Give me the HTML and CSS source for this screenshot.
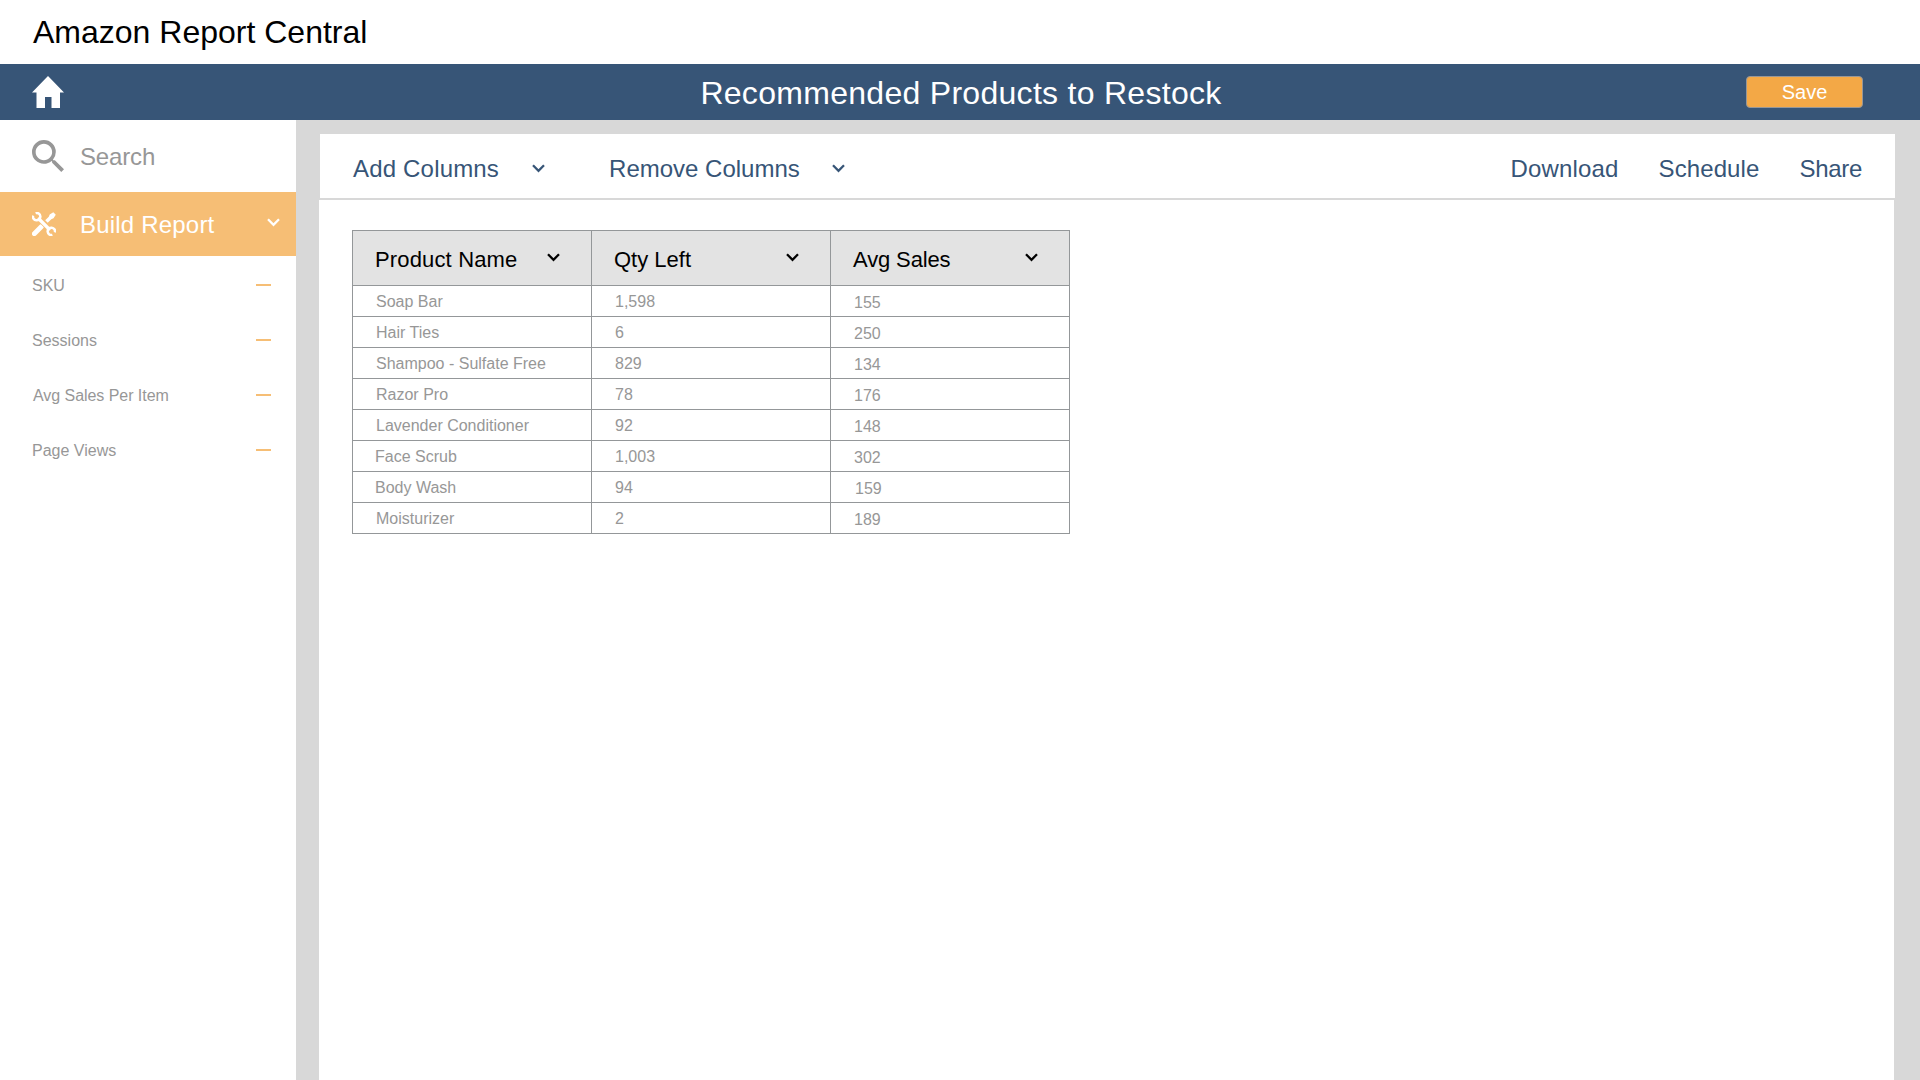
FILE: index.html
```html
<!DOCTYPE html>
<html lang="en">
<head>
<meta charset="utf-8">
<title>Amazon Report Central</title>
<link rel="stylesheet" href="styles.css">
</head>
<body>
<svg class="defs" aria-hidden="true">
  <symbol id="chevron" viewBox="0 0 13 9"><path d="M1 1.3 6.5 6.8 12 1.3" fill="none" stroke="currentColor" stroke-width="2.3"/></symbol>
</svg>
<header class="brand">Amazon Report Central</header>
<div class="titlebar">
  <svg class="home" viewBox="0 0 32 32"><path d="M16 0 32 16.5H28V32H19.5V21H13V32H4.500V16.500H0Z" fill="#fff"/></svg>
  <h1 class="title">Recommended Products to Restock</h1>
  <button class="save">Save</button>
</div>
<div class="body">
  <aside class="sidebar">
    <div class="search">
      <svg class="search-icon" viewBox="3 3 17.490 17.490"><path fill="#979797" d="M15.500 14h-.79l-.28-.27A6.471 6.471 0 0 0 16 9.500 6.500 6.500 0 1 0 9.500 16c1.610 0 3.090-.59 4.230-1.570l.27.28v.79l5 4.990L20.490 19l-4.990-5zm-6 0C7.010 14 5 11.990 5 9.500S7.010 5 9.500 5 14 7.010 14 9.500 11.990 14 9.500 14z"/></svg>
      <span class="search-label">Search</span>
    </div>
    <div class="build">
      <svg class="tools" viewBox="0 0 24 24">
        <path fill="#fff" d="M21.300 .2 23.800 2.700 21.500 6.300 19.300 7.200 15.700 10.800 13.200 8.300 16.800 4.700 17.700 2.500Z"/>
        <path d="M2.300 21.700 9.500 14.500" fill="none" stroke="#fff" stroke-width="4.800" stroke-linecap="round"/>
        <path d="M7 7 17 17" fill="none" stroke="#f6be75" stroke-width="4.800"/>
        <g fill="none" stroke="#fff">
          <path d="M6 6 18 18" stroke-width="3.200"/>
          <path d="M3.600 1.100A3.700 3.700 0 1 1 1.100 3.600" stroke-width="2.500"/>
          <path d="M20.400 22.900A3.700 3.700 0 1 1 22.900 20.400" stroke-width="2.500"/>
        </g>
      </svg>
      <span class="build-label">Build Report</span>
      <svg class="chev"><use href="#chevron"/></svg>
    </div>
    <ul class="fields">
      <li><span>SKU</span><i class="minus"></i></li>
      <li><span>Sessions</span><i class="minus"></i></li>
      <li><span class="nudge">Avg Sales Per Item</span><i class="minus"></i></li>
      <li><span>Page Views</span><i class="minus"></i></li>
    </ul>
  </aside>
  <main class="main">
    <nav class="toolbar">
      <a class="menu add"><span>Add Columns</span><svg class="chev"><use href="#chevron"/></svg></a>
      <a class="menu remove"><span>Remove Columns</span><svg class="chev"><use href="#chevron"/></svg></a>
      <div class="actions"><a class="download">Download</a><a class="schedule">Schedule</a><a class="share">Share</a></div>
    </nav>
    <section class="sheet">
      <table class="report">
        <thead><tr>
          <th><div><span class="col-name">Product Name</span><svg class="chev"><use href="#chevron"/></svg></div></th>
          <th><div><span>Qty Left</span><svg class="chev"><use href="#chevron"/></svg></div></th>
          <th><div><span class="col-avg">Avg Sales</span><svg class="chev"><use href="#chevron"/></svg></div></th>
        </tr></thead>
        <tbody>
          <tr><td>Soap Bar</td><td>1,598</td><td>155</td></tr>
          <tr><td>Hair Ties</td><td>6</td><td>250</td></tr>
          <tr><td>Shampoo - Sulfate Free</td><td>829</td><td>134</td></tr>
          <tr><td>Razor Pro</td><td>78</td><td>176</td></tr>
          <tr><td>Lavender Conditioner</td><td>92</td><td>148</td></tr>
          <tr><td class="outdent">Face Scrub</td><td>1,003</td><td>302</td></tr>
          <tr><td class="outdent">Body Wash</td><td>94</td><td class="indent">159</td></tr>
          <tr><td>Moisturizer</td><td>2</td><td>189</td></tr>
        </tbody>
      </table>
    </section>
  </main>
</div>
</body>
</html>
```
FILE: styles.css
```css
* { box-sizing: border-box; }
body { margin: 0; height: 100vh; display: flex; flex-direction: column; overflow: hidden; background: #fff; font-family: "Liberation Sans", Arial, sans-serif; color: #000; }
.defs { display: none; }
svg { display: block; flex: none; }
span, a { white-space: nowrap; }
.brand { height: 64px; flex: none; padding-left: 33px; font-size: 32px; line-height: 64px; }
.titlebar { height: 56px; flex: none; background: #375577; display: grid; grid-template-columns: 268px 1fr 268px; align-items: center; padding: 0 57px 0 32px; }
.home { width: 32px; height: 32px; }
.title { margin: 0 0 0 27px; padding-top: 2px; font-size: 32px; font-weight: 400; line-height: 54px; letter-spacing: .29px; color: #fff; text-align: center; }
.save { justify-self: end; width: 117px; height: 32px; padding: 0; background: #f3a846; border: 1px solid #979797; border-radius: 4px; color: #fff; font: 20px/28px "Liberation Sans", Arial, sans-serif; }
.body { flex: 1; display: flex; background: #d8d8d8; min-height: 0; }
.sidebar { width: 296px; flex: none; background: #fff; }
.search { height: 72px; display: flex; align-items: center; gap: 16px; padding-left: 32px; font-size: 24px; color: #979797; }
.search-icon { width: 32px; height: 32px; }
.search-label { padding-top: 2px; letter-spacing: -.15px; }
.build { height: 64px; display: flex; align-items: center; padding: 0 16px 0 32px; background: #f6be75; color: #fff; font-size: 24px; }
.build-label { padding-top: 2px; letter-spacing: .2px; }
.tools { width: 24px; height: 24px; margin-right: 24px; }
.chev { width: 13px; height: 9px; }
.build .chev { margin-left: auto; margin-bottom: 3px; }
.fields { list-style: none; margin: 0; padding: 2px 25px 0 32px; font-size: 16px; color: #979797; }
.fields li { height: 55px; display: flex; align-items: center; justify-content: space-between; }
.nudge { padding-left: 1px; letter-spacing: -.05px; }
.minus { width: 15px; height: 2px; margin-bottom: 2px; background: #f6be75; }
.main { flex: 1; display: flex; flex-direction: column; padding: 14px 26px 0 23px; }
.toolbar { height: 64px; flex: none; margin: 0 -1px 0 1px; background: #fff; display: flex; align-items: center; padding: 5px 33px 0; font-size: 24px; color: #375577; }
.menu { display: flex; align-items: center; }
.menu .chev { margin-left: 33px; margin-bottom: 1px; }
.add { letter-spacing: .18px; }
.remove { margin-left: 64px; }
.remove .chev { margin-left: 32px; }
.actions { margin-left: auto; display: flex; gap: 40px; }
.download { letter-spacing: .18px; }
.schedule { letter-spacing: .1px; }
.share { letter-spacing: -.3px; }
.sheet { flex: 1; margin-top: 2px; background: #fff; padding: 30px 33px; }
.report { width: 718px; table-layout: fixed; border-collapse: collapse; }
th, td { border: 1px solid #949799; font-weight: 400; text-align: left; }
th { height: 55px; padding: 3px 31px 0 22px; background: #e3e3e3; font-size: 22px; }
th div { display: flex; align-items: center; justify-content: space-between; }
th .chev { margin-bottom: 4px; }
.col-name { letter-spacing: .15px; }
.col-avg { letter-spacing: -.13px; }
td { height: 31px; padding: 2px 0 0 23px; font-size: 16px; line-height: 18px; color: #979797; }
td:last-child { padding-top: 3px; }
.outdent { padding-left: 22px; }
td.indent { padding-left: 24px; }
```
